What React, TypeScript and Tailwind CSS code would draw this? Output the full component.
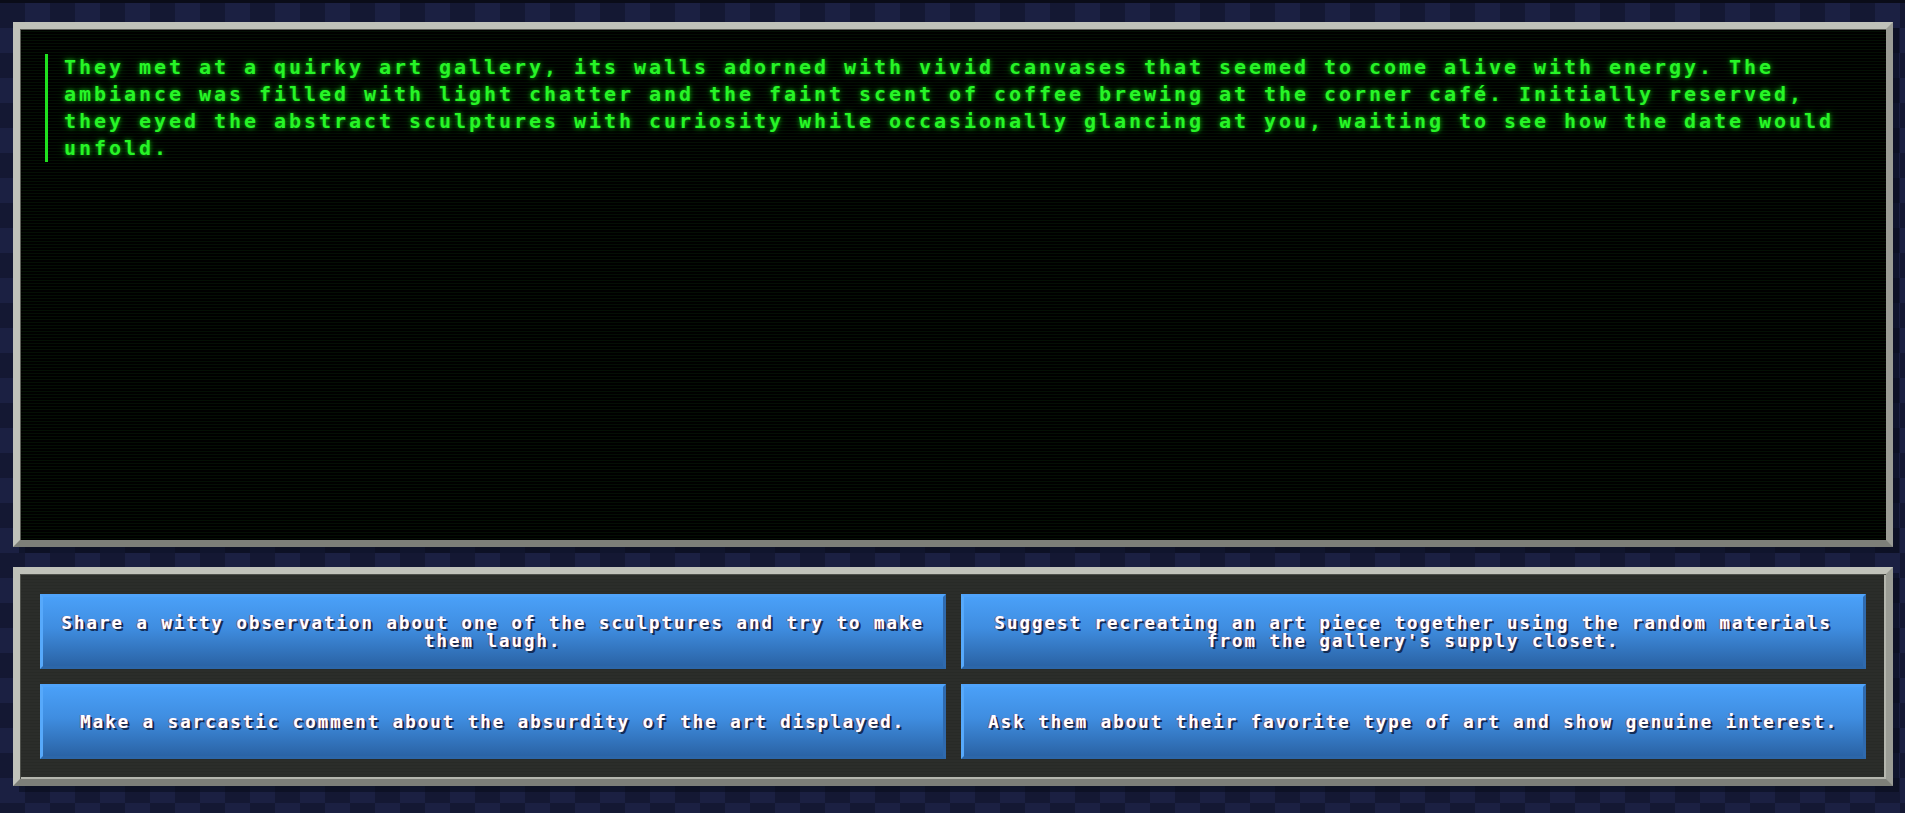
const story =
  "They met at a quirky art gallery, its walls adorned with vivid canvases that seemed to come alive with energy. The ambiance was filled with light chatter and the faint scent of coffee brewing at the corner café. Initially reserved, they eyed the abstract sculptures with curiosity while occasionally glancing at you, waiting to see how the date would unfold.";

const choices = [
  "Share a witty observation about one of the sculptures and try to make them laugh.",
  "Suggest recreating an art piece together using the random materials from the gallery's supply closet.",
  "Make a sarcastic comment about the absurdity of the art displayed.",
  "Ask them about their favorite type of art and show genuine interest.",
];

const mono = { fontFamily: '"DejaVu Sans Mono", "Liberation Mono", monospace' };

export default function App() {
  return (
    <div className="h-screen w-full flex flex-col gap-5 pt-[19px] pb-[27px] pl-[13px] pr-[12px] border-t-[3px] border-[#0a0c18] bg-[conic-gradient(#1b2042_25%,#141833_0_50%,#1b2042_0_75%,#141833_0)] bg-[length:50px_50px]">
      {/* story screen */}
      <div className="flex-1 border-[7px] border-t-[#c0c2ba] border-l-[#c0c2ba] border-b-[#7d7f79] border-r-[#9a9c95] shadow-[6px_6px_0_rgba(5,8,20,0.45)]">
        <div className="h-full p-[25px] bg-black bg-[repeating-linear-gradient(180deg,#000_0px,#000_2px,#041004_2px,#041004_3px)] shadow-[inset_1px_1px_0_#5c5e58]">
          <div className="border-l-[3px] border-[#1fe01f] pl-4">
            <p
              className="text-[20px] leading-[27px] font-bold tracking-[2.96px] text-[#27f527] [text-shadow:0_0_4px_rgba(20,255,20,0.6),0_0_10px_rgba(20,255,20,0.35)]"
              style={mono}
            >
              {story}
            </p>
          </div>
        </div>
      </div>

      {/* choices */}
      <div className="border-[7px] border-t-[#c0c2ba] border-l-[#c0c2ba] border-b-[#7d7f79] border-r-[#9a9c95] shadow-[6px_6px_0_rgba(5,8,20,0.45)]">
        <div className="p-5 bg-[#2b2d2a] bg-[repeating-linear-gradient(180deg,#2b2d2a_0px,#2b2d2a_2px,#282a27_2px,#282a27_3px)] shadow-[inset_1px_1px_0_#4e504b,inset_-2px_-2px_0_#b4b6ae] grid grid-cols-2 gap-[15px]">
          {choices.map((c) => (
            <button
              key={c}
              className="h-[75px] px-4 flex items-center justify-center text-center border-[3px] border-t-[#4fa3fb] border-l-[#57a9fb] border-b-[#2c66a8] border-r-[#2f6aae] bg-[linear-gradient(180deg,#4aa0f8_0%,#3f8de0_45%,#2a63a5_100%)]"
            >
              <span
                className="text-[17.5px] leading-[18px] font-bold tracking-[1.964px] text-white [text-shadow:-1px_0_0_rgba(255,70,70,0.55),2px_2px_0_#132c55]"
                style={mono}
              >
                {c}
              </span>
            </button>
          ))}
        </div>
      </div>
    </div>
  );
}
